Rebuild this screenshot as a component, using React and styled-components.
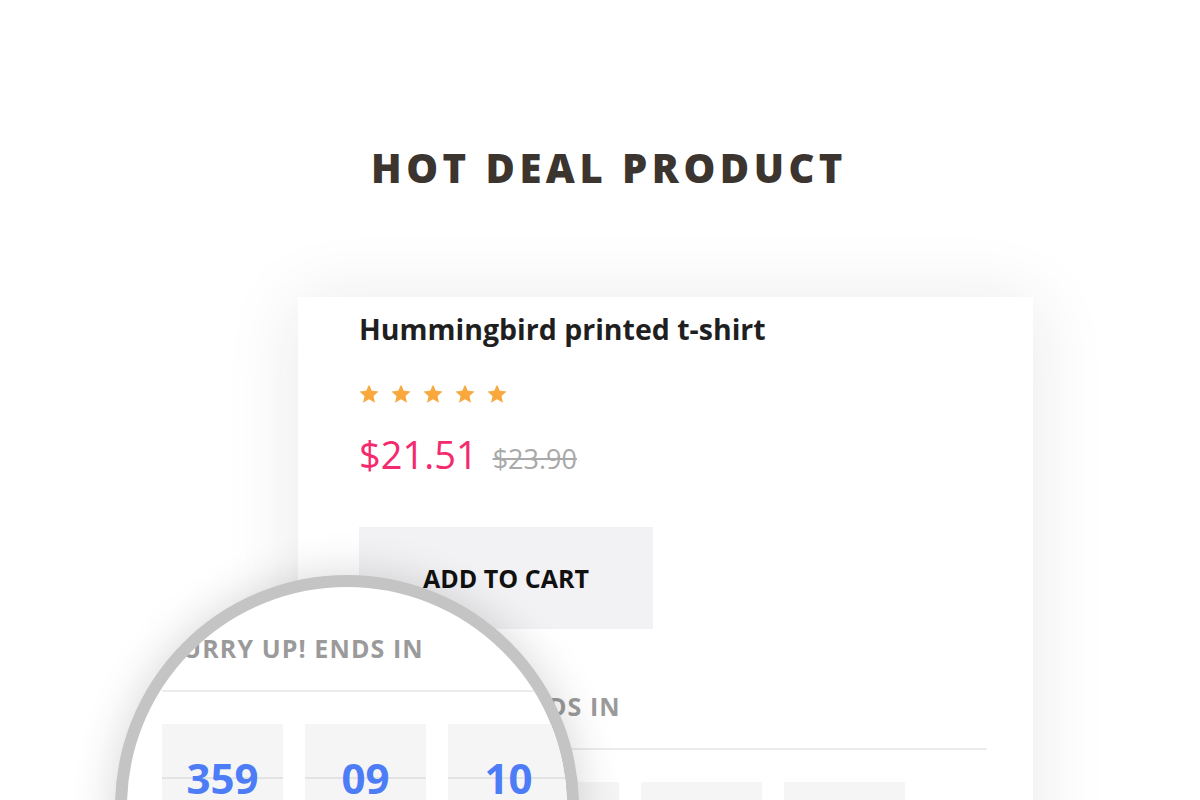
import React from "react";
import styled, { createGlobalStyle } from "styled-components";

const GlobalStyle = createGlobalStyle`
  html, body {
    margin: 0;
    padding: 0;
    background: #ffffff;
  }
  body {
    font-family: "Open Sans", "Noto Sans", sans-serif;
  }
`;

const Page = styled.div`
  position: relative;
  width: 1200px;
  height: 800px;
  overflow: hidden;
  padding-top: 148px;
  box-sizing: border-box;
  background: #fff;
`;

const Heading = styled.h2`
  margin: 0;
  padding-left: 18px;
  text-align: center;
  font-family: "Open Sans", sans-serif;
  font-weight: 800;
  font-size: 40px;
  line-height: 1;
  letter-spacing: 4.5px;
  color: #3b342f;
`;

const Card = styled.section`
  margin: 109px 0 0 298px;
  width: 735px;
  box-sizing: border-box;
  padding: 18px 46px 60px 61px;
  background: #fff;
  box-shadow: 0 6px 70px rgba(60, 30, 50, 0.1);
`;

const Title = styled.h3`
  margin: 0;
  font-size: 28.5px;
  font-weight: 700;
  line-height: 1;
  color: #1f1f1f;
`;

const Stars = styled.div`
  display: flex;
  gap: 12px;
  margin-top: 40px;
  height: 20px;
`;

const PriceRow = styled.div`
  display: flex;
  align-items: baseline;
  gap: 15px;
  margin-top: 31px;
  line-height: 1;
`;

const Price = styled.span`
  font-size: 38px;
  color: #f5296e;
`;

const OldPrice = styled.span`
  font-size: 27px;
  color: #a9a9a9;
  text-decoration: line-through;
`;

const CartButton = styled.button`
  display: flex;
  align-items: center;
  justify-content: center;
  margin-top: 54px;
  width: 294px;
  height: 102px;
  border: 0;
  background: #f2f2f4;
  font-family: "Open Sans", sans-serif;
  font-size: 25px;
  font-weight: 700;
  color: #111;
  padding: 0;
`;

const Hurry = styled.div`
  margin-top: 65px;
  font-size: 25px;
  font-weight: 700;
  line-height: 1;
  letter-spacing: 1.1px;
  color: #9a9a9a;
  white-space: nowrap;
`;

const Rule = styled.div`
  margin-top: 29px;
  height: 2px;
  background: #ececec;
`;

const Boxes = styled.div`
  display: flex;
  gap: 22px;
  margin-top: 32px;
  margin-left: ${({ $shift }) => $shift || 0}px;
`;

const Box = styled.div`
  display: flex;
  align-items: center;
  justify-content: center;
  width: 121px;
  height: 108px;
  background: linear-gradient(
    #f5f5f5 0,
    #f5f5f5 calc(50% - 1px),
    #e3e3e3 calc(50% - 1px),
    #e3e3e3 calc(50% + 1px),
    #f5f5f5 calc(50% + 1px)
  );
  font-size: 42px;
  font-weight: 700;
  line-height: 1;
  color: #4d7cf7;
`;

const Lens = styled.div`
  position: absolute;
  left: 115px;
  top: 575px;
  width: 464px;
  height: 464px;
  box-sizing: border-box;
  border: 12px solid #c4c4c4;
  border-radius: 50%;
  overflow: hidden;
  background: #fff;
  box-shadow: 0 0 45px rgba(0, 0, 0, 0.16);
`;

const LensContent = styled.div`
  position: absolute;
  left: 35px;
  top: 49px;
  width: 628px;
  & > div:first-child {
    margin-top: 0;
  }
`;

const Star = () => (
  <svg width="20" height="20" viewBox="0 0 24 24">
    <path
      fill="#f8a83c"
      d="M12 0.8l3.4 7.4 8.1.8-6.1 5.4 1.8 8L12 18.3l-7.2 4.1 1.8-8L0.5 9l8.1-.8z"
    />
  </svg>
);

const values = ["359", "09", "10", "42"];

const Countdown = ({ shift }) => (
  <>
    <Hurry>HURRY UP! ENDS IN</Hurry>
    <Rule />
    <Boxes $shift={shift}>
      {values.map((v, i) => (
        <Box key={i}>{v}</Box>
      ))}
    </Boxes>
  </>
);

export default function App() {
  return (
    <Page>
      <GlobalStyle />
      <Heading>HOT DEAL PRODUCT</Heading>
      <Card>
        <Title>Hummingbird printed t-shirt</Title>
        <Stars>
          {[0, 1, 2, 3, 4].map((i) => (
            <Star key={i} />
          ))}
        </Stars>
        <PriceRow>
          <Price>$21.51</Price>
          <OldPrice>$23.90</OldPrice>
        </PriceRow>
        <CartButton>ADD TO CART</CartButton>
        <Countdown shift={-4} />
      </Card>
      <Lens>
        <LensContent>
          <Countdown />
        </LensContent>
      </Lens>
    </Page>
  );
}
